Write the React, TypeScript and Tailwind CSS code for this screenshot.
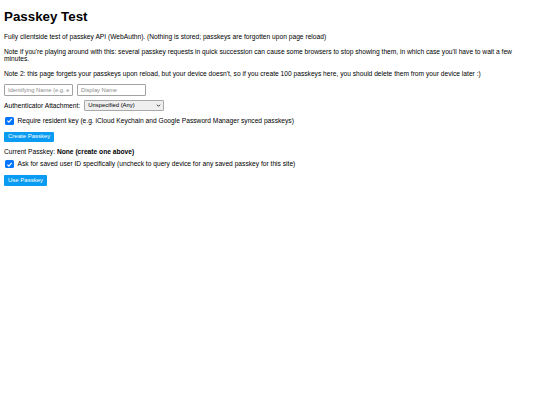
import React from "react";

function Check() {
  return (
    <span className="flex h-[8.5px] w-[8.5px] shrink-0 items-center justify-center rounded-[1.5px] bg-[#0075ff]">
      <svg viewBox="0 0 10 10" className="h-[7px] w-[7px]">
        <path d="M2 5.2 L4.1 7.3 L8.2 2.6" fill="none" stroke="white" strokeWidth="1.6" />
      </svg>
    </span>
  );
}

export default function App() {
  return (
    <div className="min-h-[405px] bg-white px-[4px] font-['Liberation_Sans',Arial,sans-serif] text-[6.67px] leading-[7.7px] text-black">
      <h1 className="pt-[9px] text-[13.33px] font-bold leading-[15.3px]">Passkey Test</h1>
      <p className="mt-[9px]">
        Fully clientside test of passkey API (WebAuthn). (Nothing is stored; passkeys are forgotten upon page reload)
      </p>
      <p className="mt-[6.7px]">
        Note if you're playing around with this: several passkey requests in quick succession can cause some browsers to
        stop showing them, in which case you'll have to wait a few minutes.
      </p>
      <p className="mt-[6.7px]">
        Note 2: this page forgets your passkeys upon reload, but your device doesn't, so if you create 100 passkeys here,
        you should delete them from your device later :)
      </p>
      <div className="mt-[6.7px] flex gap-[4px]">
        <input
          className="h-[12px] w-[69px] rounded-[1px] border border-[#a3a3a3] px-[3px] text-[5.8px] placeholder:text-[#8a8a8a]"
          placeholder="Identifying Name (e.g. email)"
        />
        <input
          className="h-[12px] w-[69px] rounded-[1px] border border-[#a3a3a3] px-[3px] text-[5.8px] placeholder:text-[#8a8a8a]"
          placeholder="Display Name"
        />
      </div>
      <div className="mt-[4px] flex items-center gap-[4px]">
        <span>Authenticator Attachment:</span>
        <div className="flex h-[10.5px] w-[80px] items-center justify-between rounded-[1px] border border-[#a8a8a8] bg-[#efefef] pl-[3px] pr-[2px] text-[5.9px]">
          <span>Unspecified (Any)</span>
          <svg viewBox="0 0 10 10" className="h-[5px] w-[5px]">
            <path d="M2 3.5 L5 6.5 L8 3.5" fill="none" stroke="black" strokeWidth="1.6" />
          </svg>
        </div>
      </div>
      <div className="mt-[6px] flex items-center gap-[4px] pl-[1px]">
        <Check />
        <span>Require resident key (e.g. iCloud Keychain and Google Password Manager synced passkeys)</span>
      </div>
      <button className="mt-[7px] h-[10px] rounded-[1px] bg-[#0a9cf2] px-[4px] text-[6px] text-white">
        Create Passkey
      </button>
      <div className="mt-[6px]">
        Current Passkey: <b>None (create one above)</b>
      </div>
      <div className="mt-[4px] flex items-center gap-[4px] pl-[1px]">
        <Check />
        <span>Ask for saved user ID specifically (uncheck to query device for any saved passkey for this site)</span>
      </div>
      <button className="mt-[7px] h-[11px] rounded-[1px] bg-[#0a9cf2] px-[4px] text-[6px] text-white">
        Use Passkey
      </button>
    </div>
  );
}
